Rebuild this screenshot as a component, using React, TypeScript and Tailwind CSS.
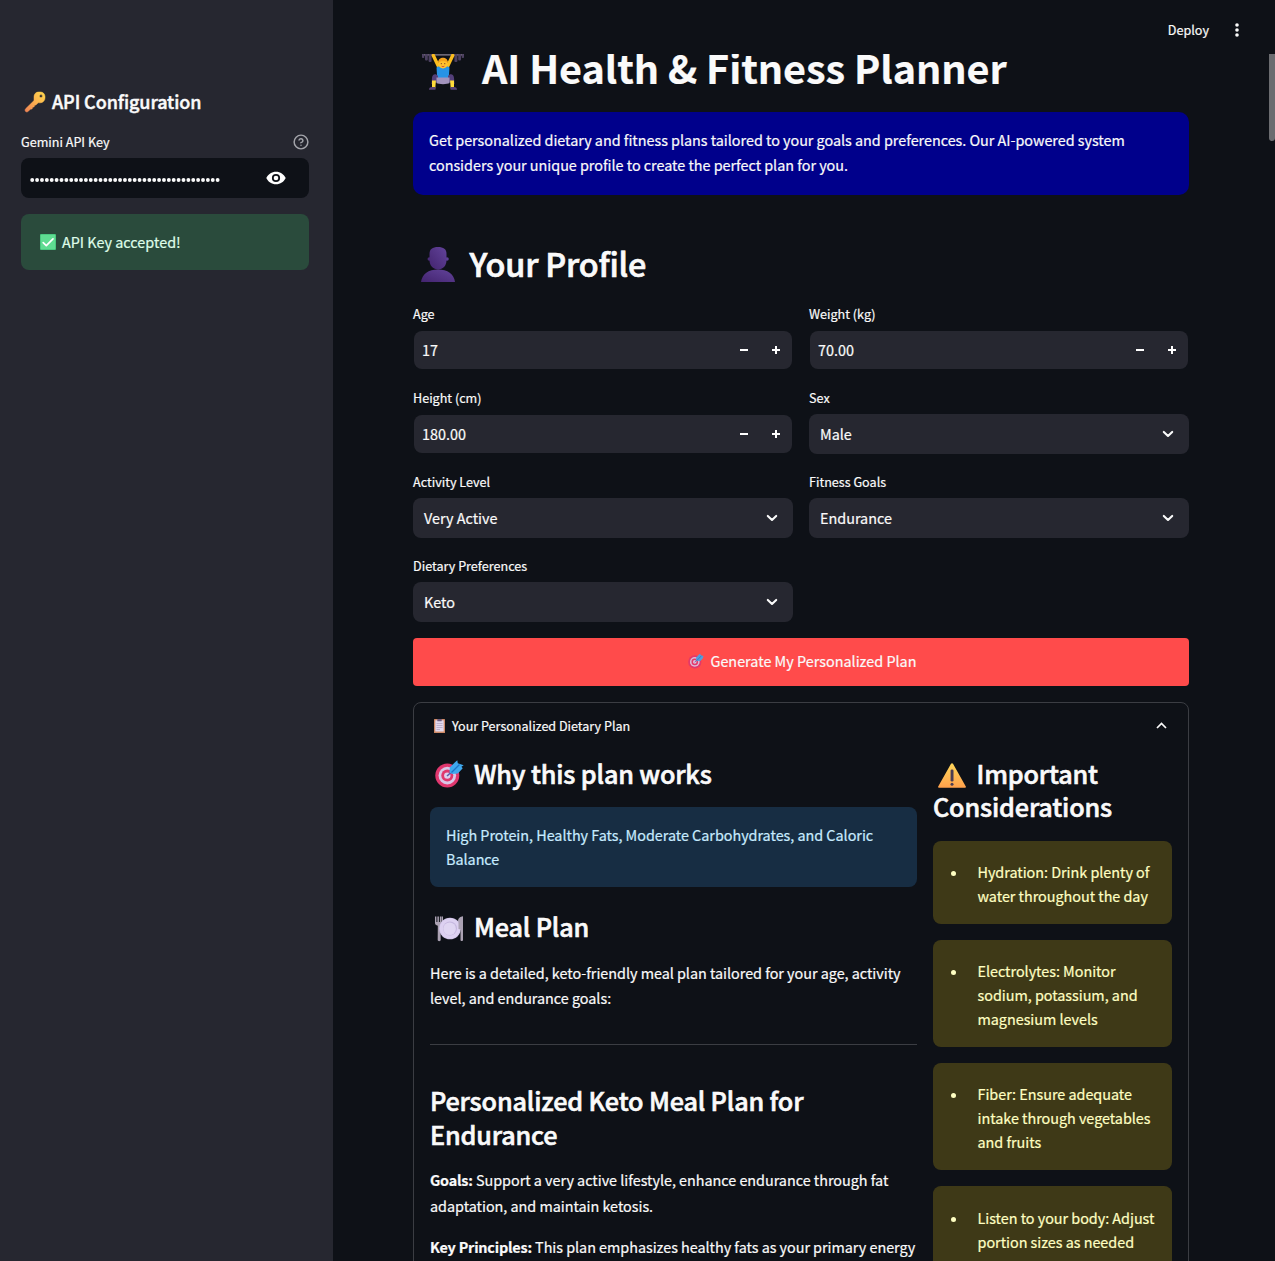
import type { ReactNode } from "react";

/* ---------- icons ---------- */

const KeyIcon = () => (
  <svg className="size-[22px] shrink-0" viewBox="0 0 22 22">
    <defs>
      <linearGradient id="key" x1="1" y1="0" x2="0" y2="1">
        <stop offset="0" stopColor="#ffd84d" />
        <stop offset=".45" stopColor="#fdb44e" />
        <stop offset="1" stopColor="#ef8255" />
      </linearGradient>
    </defs>
    <path
      fill="url(#key)"
      stroke="url(#key)"
      strokeWidth=".5"
      fillRule="evenodd"
      d="M14.700 1h1.700c2.600 0 4.600 2 4.600 4.600v1.200c0 2.900-2.100 5-4.900 5h-1.900l-2.300 2.200-1.300.2-.5 1.700-1.500.3-.5 1.700-1.800.3-1.900 2c-.9.9-2.100 1-2.800.3-.8-.8-.7-2 .2-2.900l8.200-8V6c0-2.900 1.800-5 4.700-5Zm2.200 2.600a1.500 1.500 0 1 0 .1 3 1.500 1.500 0 0 0-.1-3Z"
    />
  </svg>
);

const HelpIcon = () => (
  <svg className="size-4" viewBox="0 0 24 24" fill="none" stroke="#a3a4aa" strokeWidth="2.200" strokeLinecap="round" strokeLinejoin="round">
    <circle cx="12" cy="12" r="10.300" />
    <path d="M9.100 9a3 3 0 0 1 5.800 1c0 2-3 3-3 3" />
    <path d="M12 17h.01" />
  </svg>
);

const EyeIcon = () => (
  <svg className="h-3.5 w-5" viewBox="0 -.5 20 14" fill="#fff">
    <path
      fillRule="evenodd"
      d="M10 .2c4.300 0 8 2.500 9.700 6.300-1.700 3.800-5.400 6.300-9.700 6.300S2 10.300.3 6.500C2 2.700 5.700.2 10 .2Zm0 2.200a4.100 4.100 0 1 0 0 8.200 4.100 4.100 0 0 0 0-8.200Z"
    />
    <circle cx="10" cy="6.500" r="2.300" />
  </svg>
);

const CheckBox = () => (
  <svg className="size-4" viewBox="0 0 16 16">
    <rect width="16" height="16" rx="1" fill="#45c27b" />
    <rect x=".8" y=".8" width="14.400" height="14.400" rx=".8" fill="#5fdc92" />
    <path d="M3.200 8.600 6.300 11.700 13 4.800" fill="none" stroke="#fff" strokeWidth="1.700" strokeLinecap="round" strokeLinejoin="round" />
  </svg>
);

const Lifter = () => (
  <svg className="h-[40px] w-[44px] shrink-0" viewBox="0 0 44 40">
    <path d="M1 3.900h42" stroke="#8d8494" strokeWidth="1.200" />
    <g fill="#4c4060">
      <rect x="1" y="3" width="2.300" height="4" rx=".8" />
      <rect x="4" y="2" width="2.800" height="7.500" rx="1" />
      <rect x="7.600" y="2" width="3" height="9" rx="1" />
      <rect x="33.400" y="2" width="3" height="9" rx="1" />
      <rect x="37.200" y="2" width="2.800" height="7.500" rx="1" />
      <rect x="40.700" y="3" width="2.300" height="4" rx=".8" />
    </g>
    <path d="M12.300 4.500 17.800 16M31.700 4.500 26.200 16" stroke="#fbbd1e" strokeWidth="3.400" strokeLinecap="round" />
    <path d="M15.500 16.500c2-2.500 11-2.500 13 0l-.8 12.500H16.300Z" fill="#2793e6" />
    <circle cx="22" cy="12.500" r="4.900" fill="#ffc22e" />
    <path d="M17.200 12c-.6-7 10.200-7 9.600 0-1.500-2.500-8-2.500-9.600 0Z" fill="#f7a51c" />
    <path d="M19.800 12.700h1.100M23.200 12.700h1.100" stroke="#7a3b20" strokeWidth="1" />
    <path d="M20.600 15.200q1.400.9 2.800 0" stroke="#d24b3a" strokeWidth=".9" fill="none" />
    <path d="M11 27c0-4 4-5 6-2v5l-4 3h-2.500ZM33 27c0-4-4-5-6-2v5l4 3h2.500Z" fill="#54407a" />
    <path d="M15.500 26.500h13v5.500c-2 1.500-11 1.500-13 0Z" fill="#a294bd" />
    <path d="M11 29.500h3.900l-.6 8h-3.300ZM33 29.500h-3.900l.6 8h3.300Z" fill="#ffdc3a" />
    <path d="M8 38.800c0-2 1.500-2.700 3-2.700h3.500v2.700ZM36 38.800c0-2-1.500-2.700-3-2.700h-3.500v2.700Z" fill="#5a4677" />
  </svg>
);

const Bust = () => (
  <svg className="h-[36px] w-[34px] shrink-0" viewBox="0 0 34 36">
    <defs>
      <linearGradient id="bust" x1="1" y1="0" x2="0" y2="1">
        <stop offset="0" stopColor="#62439a" />
        <stop offset="1" stopColor="#43246f" />
      </linearGradient>
    </defs>
    <circle cx="8.300" cy="13" r="1.800" fill="#4a2b78" />
    <circle cx="26" cy="13" r="1.800" fill="#5f4097" />
    <path d="M8.500 8c0-5 3-7 8.500-7s8.500 2 8.500 7v6c0 6-3.800 9.500-8.400 9.500S8.500 20 8.500 14Z" fill="url(#bust)" />
    <path d="M0 36c1-8 7.500-12.500 17-12.500S33 28 34 36Z" fill="url(#bust)" />
  </svg>
);

const Target = ({ className }: { className: string }) => (
  <svg className={className} viewBox="0 0 29 28">
    <circle cx="12.300" cy="15.600" r="12" fill="#e0376e" />
    <circle cx="12.300" cy="15.600" r="8.800" fill="#d9c8e8" />
    <circle cx="12.300" cy="15.600" r="6" fill="#e0376e" />
    <circle cx="12.300" cy="15.600" r="3.200" fill="#ddd0ee" />
    <path d="m12 16 8-7" stroke="#5b5cae" strokeWidth="1.600" />
    <path d="m14.500 12.500.3-5L20 2.300 22.300.3l.5 3 5.900 2-2.300 1.500 1.300 1.500-4.800 5.200-5.600.6Z" fill="#3fa9ef" />
    <path d="m16.500 12.500 8-8" stroke="#1d74c9" strokeWidth="1.300" />
  </svg>
);

const Clipboard = () => (
  <svg className="h-[14px] w-[11px] shrink-0" viewBox="0 0 11 14">
    <rect width="11" height="14" rx=".6" fill="#cf8a66" />
    <rect x="1.300" y="1.300" width="8.400" height="11.200" fill="#e2d9ee" />
    <rect x="3.300" y="0" width="4.400" height="2.300" rx=".4" fill="#6d5c80" />
    <path d="M2.500 4.500h6M2.500 6.500h6M2.500 8.500h6M2.500 10.500h3.500" stroke="#a596b8" strokeWidth=".6" />
  </svg>
);

const Plate = () => (
  <svg className="h-[26px] w-[28px] shrink-0" viewBox="0 0 28 26">
    <g fill="#aba2b3">
      <path d="M0 .5h1.400v5.500h1V.5h1.500V6h1V.5h1.400V6h.4V.5H8v6.500c0 1.500-1 2.500-2.500 2.700l.2 14.300c0 1.500-3 1.500-3 0L2.800 9.700C1 9.400 0 8.500 0 7Z" />
      <path d="M28 14h-2.700L23 13V5c0-3 2-4.500 5-4.500Z" />
    </g>
    <circle cx="15" cy="12.500" r="10.800" fill="#cfc2e6" />
    <circle cx="15" cy="12.500" r="10.200" fill="#ddd1f1" />
    <circle cx="15" cy="12.500" r="7" fill="#c6b8df" />
    <circle cx="14.600" cy="12.800" r="6.300" fill="#e0d6f2" />
    <path d="M23.500 6c0-3 2-5.300 4.500-5.500V24c0 1.400-2.500 1.400-2.500 0V13.500l-2-.5Z" fill="#aba2b3" />
  </svg>
);

const Warning = () => (
  <svg className="h-[25px] w-7 shrink-0" viewBox="0 0 28 25">
    <defs>
      <linearGradient id="warn" x1="0" y1="0" x2="0" y2="1">
        <stop offset="0" stopColor="#ffd75a" />
        <stop offset="1" stopColor="#ffa04c" />
      </linearGradient>
    </defs>
    <path d="M13 .8c.5-.8 1.500-.8 2 0l12.800 22.700c.4.700 0 1.300-.8 1.300H1c-.8 0-1.200-.6-.8-1.300Z" fill="url(#warn)" />
    <rect x="12.600" y="6.500" width="2.900" height="12" rx="1.300" fill="#4b3c52" />
    <circle cx="14" cy="21.200" r="1.500" fill="#4b3c52" />
  </svg>
);

const ChevronDown = () => (
  <svg className="h-2 w-3" viewBox="0 0 12 8" fill="none" stroke="#fafafa" strokeWidth="2.100" strokeLinecap="round" strokeLinejoin="round">
    <path d="m1.800 1.900 4.200 4.100 4.200-4.100" />
  </svg>
);

/* ---------- building blocks ---------- */

const Label = ({ children }: { children: ReactNode }) => (
  <div className="h-7 pt-px text-[12.6px] leading-[22px] whitespace-nowrap">{children}</div>
);

function NumberField({ label, value }: { label: string; value: string }) {
  return (
    <div>
      <Label>{label}</Label>
      <div className="flex h-10 p-px">
        <div className="flex flex-1 items-center rounded-lg bg-[#262730] pl-2">
          <span className="flex-1 text-[14.4px] leading-6">{value}</span>
          <span className="flex w-8 justify-center">
            <span className="h-0.5 w-2 bg-white" />
          </span>
          <span className="flex w-8 justify-center">
            <svg className="size-2" viewBox="0 0 8 8" fill="#fff">
              <path d="M3 0v3H0v2h3v3h2V5h3V3H5V0z" />
            </svg>
          </span>
        </div>
      </div>
    </div>
  );
}

function SelectField({ label, value }: { label: string; value: string }) {
  return (
    <div>
      <Label>{label}</Label>
      <div className="flex h-10 items-center justify-between rounded-lg bg-[#262730] pr-[15px] pl-[11px]">
        <span className="text-[14.4px] leading-6">{value}</span>
        <ChevronDown />
      </div>
    </div>
  );
}

const SubHeading = ({ icon, children }: { icon?: ReactNode; children: ReactNode }) => (
  <h3 className="flex items-center text-[25.2px] leading-[33px] font-medium tracking-[-0.15px] whitespace-nowrap [-webkit-text-stroke:0.6px_#fafafa]">
    {icon}
    <span>{children}</span>
  </h3>
);

function Warn({ lines }: { lines: string[] }) {
  return (
    <div className="flex rounded-lg bg-[#3e3917] pt-[19px] pb-4 text-[14.4px] leading-6 tracking-[-0.03px] whitespace-nowrap text-[#ffffc2]">
      <span className="mt-[11px] mr-[21.500px] ml-[18px] size-[5px] rounded-full bg-[#ffffc2]" />
      <div>
        {lines.map((l) => (
          <div key={l}>{l}</div>
        ))}
      </div>
    </div>
  );
}

/* ---------- page ---------- */

function Sidebar() {
  return (
    <aside className="w-[333px] shrink-0 bg-[#262730] pt-[90px] pr-6 pl-[21px]">
      <h2 className="flex h-6 items-center gap-[6px] pl-[3px]">
        <KeyIcon />
        <span className="mb-[2px] text-[18px] leading-6 font-medium tracking-[-0.09px] [-webkit-text-stroke:0.45px_#fafafa]">
          API Configuration
        </span>
      </h2>
      <div className="mt-4 flex h-7 justify-between">
        <Label>Gemini API Key</Label>
        <div className="pt-1">
          <HelpIcon />
        </div>
      </div>
      <div className="flex h-10 items-center justify-between rounded-lg bg-[#0e1117] pr-[23px] pl-[9px]">
        <svg className="mt-[3px] h-1 w-[190px]" viewBox="0 0 190 4" fill="#fafafa">
          {Array.from({ length: 39 }, (_, i) => (
            <circle key={i} cx={2.2 + i * 4.88} cy="2" r="1.950" />
          ))}
        </svg>
        <EyeIcon />
      </div>
      <div className="mt-4 flex h-14 items-center gap-[6px] rounded-lg bg-[#2a4b3c] pl-[19px]">
        <CheckBox />
        <span className="text-[14.4px] leading-6 text-[#dffde9]">API Key accepted!</span>
      </div>
    </aside>
  );
}

function DietaryPlan() {
  return (
    <section className="mt-4 h-[620px] rounded-lg border border-[#3b3d43] px-4">
      <div className="flex h-12 items-center justify-between pr-[5px] pb-[2px] pl-1">
        <div className="flex items-center gap-[7px]">
          <Clipboard />
          <span className="text-[12.6px] leading-5 tracking-[-0.02px]">Your Personalized Dietary Plan</span>
        </div>
        <svg className="mb-0.5 h-[7px] w-[11px]" viewBox="0 0 11 7" fill="none" stroke="#fafafa" strokeWidth="1.700">
          <path d="m1 6 4.500-4.500L10 6" />
        </svg>
      </div>
      <div className="flex gap-4 pt-[6px]">
        <div className="w-[487px] shrink-0">
          <SubHeading icon={<Target className="mr-[10px] ml-[5px] h-7 w-[29px]" />}>Why this plan works</SubHeading>
          <div className="mt-[17px] h-20 rounded-lg bg-[#172d43] px-4 pt-4 text-[14.4px] leading-6 tracking-[-0.03px] whitespace-nowrap text-[#c7ebff]">
            High Protein, Healthy Fats, Moderate Carbohydrates, and Caloric
            <br />
            Balance
          </div>
          <div className="mt-[23px]">
            <SubHeading
              icon={
                <span className="mt-1 mr-[11px] ml-[5px]">
                  <Plate />
                </span>
              }
            >
              Meal Plan
            </SubHeading>
          </div>
          <p className="mt-[17px] text-[14.4px] leading-[25px] tracking-[-0.028px] whitespace-nowrap">
            Here is a detailed, keto-friendly meal plan tailored for your age, activity
            <br />
            level, and endurance goals:
          </p>
          <hr className="mt-[34px] border-[#3b3d43]" />
          <div className="mt-[39px] flex flex-col gap-px">
            <SubHeading>Personalized Keto Meal Plan for</SubHeading>
            <SubHeading>Endurance</SubHeading>
          </div>
          <p className="mt-4 text-[14.4px] leading-[25.600px] tracking-[-0.028px] whitespace-nowrap">
            <b className="tracking-[-0.2px]">Goals:</b> Support a very active lifestyle, enhance endurance through fat
            <br />
            adaptation, and maintain ketosis.
          </p>
          <p className="mt-4 text-[14.4px] leading-[25.600px] tracking-[-0.035px] whitespace-nowrap">
            <b className="tracking-[-0.2px]">Key Principles:</b> This plan emphasizes healthy fats as your primary energy
          </p>
        </div>
        <div className="flex w-[239px] shrink-0 flex-col gap-4">
          <div>
            <SubHeading
              icon={
                <span className="mt-[3px] mr-[10.500px] ml-[5px]">
                  <Warning />
                </span>
              }
            >
              Important
            </SubHeading>
            <SubHeading>Considerations</SubHeading>
            <div className="h-0.5" />
          </div>
          <Warn lines={["Hydration: Drink plenty of", "water throughout the day"]} />
          <Warn lines={["Electrolytes: Monitor", "sodium, potassium, and", "magnesium levels"]} />
          <Warn lines={["Fiber: Ensure adequate", "intake through vegetables", "and fruits"]} />
          <div className="rounded-lg bg-[#3e3917] pt-px">
            <Warn lines={["Listen to your body: Adjust", "portion sizes as needed"]} />
          </div>
        </div>
      </div>
    </section>
  );
}

export default function App() {
  return (
    <div className="flex h-[1261px] w-[1275px] overflow-hidden bg-[#0e1117] text-[#fafafa] [font-family:'Noto_Sans_CJK_SC','Noto_Sans',sans-serif] [-webkit-text-stroke:0.2px_currentColor]">
      <Sidebar />
      <div className="flex min-w-0 flex-1 flex-col">
        <header className="flex h-[54px] shrink-0 items-start justify-end pt-5 pr-[35px]">
          <span className="text-[12.6px] leading-5">Deploy</span>
          <svg className="mt-[3px] ml-[25px] h-[14px] w-1.5" viewBox="0 0 6 14" fill="#fafafa">
            <circle cx="3" cy="2" r="1.800" />
            <circle cx="3" cy="7" r="1.800" />
            <circle cx="3" cy="12" r="1.800" />
          </svg>
        </header>
        <div className="flex min-h-0 flex-1 justify-between overflow-hidden">
          <main className="ml-20 w-[776px] shrink-0">
            <h1 className="-mt-[10px] flex h-[53px] items-center gap-[17px] pl-2">
              <span className="mt-[1px]">
                <Lifter />
              </span>
              <span className="mb-[7px] text-[39.6px] leading-[32px] font-bold tracking-[-0.07px] whitespace-nowrap">
                AI Health &amp; Fitness Planner
              </span>
            </h1>
            <div className="mt-[15px] h-[83px] rounded-[10px] bg-[#00008b] px-4 pt-[15px] text-[14.4px] leading-[25px] tracking-[-0.028px] whitespace-nowrap">
              Get personalized dietary and fitness plans tailored to your goals and preferences. Our AI-powered system
              <br />
              considers your unique profile to create the perfect plan for you.
            </div>
            <h2 className="mt-[47px] flex h-11 items-center gap-[15px] pl-[7.500px]">
              <Bust />
              <span className="mb-[2px] text-[32.4px] leading-[44px] font-medium tracking-[-0.2px] [-webkit-text-stroke:0.7px_#fafafa]">
                Your Profile
              </span>
            </h2>
            <div className="mt-4 grid grid-cols-2 gap-4">
              <NumberField label="Age" value="17" />
              <NumberField label="Weight (kg)" value="70.00" />
              <NumberField label="Height (cm)" value="180.00" />
              <SelectField label="Sex" value="Male" />
              <SelectField label="Activity Level" value="Very Active" />
              <SelectField label="Fitness Goals" value="Endurance" />
              <SelectField label="Dietary Preferences" value="Keto" />
            </div>
            <button className="mt-4 flex h-12 w-full items-center justify-center gap-[6px] rounded bg-[#ff4b4b] pb-0.5 pl-[3px] text-[14.4px] leading-6">
              <Target className="h-4 w-4 opacity-90" />
              <span>Generate My Personalized Plan</span>
            </button>
            <DietaryPlan />
          </main>
          <div className="h-[87px] w-1.5 rounded-b-[3px] bg-[#6b6c70]" />
        </div>
      </div>
    </div>
  );
}
